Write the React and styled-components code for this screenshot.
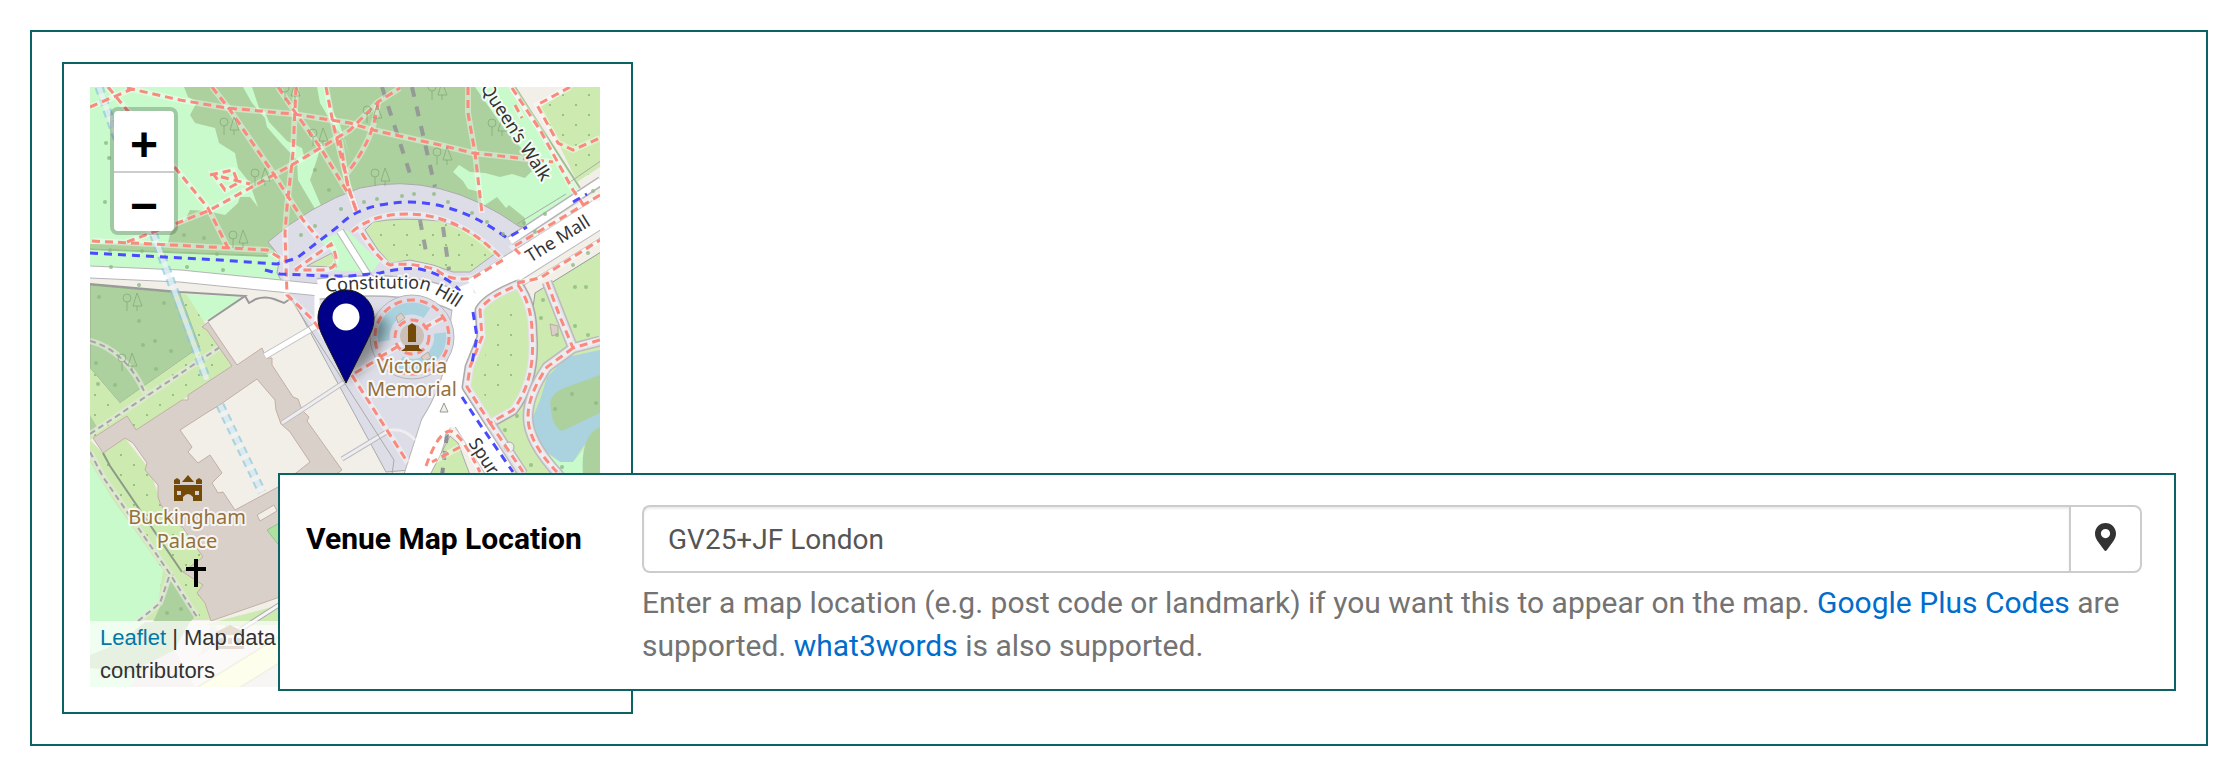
import styled, { createGlobalStyle } from 'styled-components'

const App = () => {
  return (
    <>
      <GlobalStyle />
      <Page>
        <MapFrame>
          <MapView>
            <StreetMap />
            <ZoomControl>
              <ZoomButton type="button" aria-label="Zoom in">+</ZoomButton>
              <ZoomButton type="button" aria-label="Zoom out">−</ZoomButton>
            </ZoomControl>
            <Attribution>
              <MapLink href="#leaflet">Leaflet</MapLink> | Map data
              <br />
              contributors
            </Attribution>
          </MapView>
        </MapFrame>

        <FieldPanel>
          <Label htmlFor="venue-location">Venue Map Location</Label>
          <div>
            <InputGroup>
              <Input id="venue-location" type="text" defaultValue="GV25+JF London" />
              <PinButton type="button" aria-label="Find on map">
                <PinIcon viewBox="0 0 21 28">
                  <path
                    fillRule="evenodd"
                    d="M10.5 0C4.7 0 0 4.7 0 10.5c0 3 1.100 5.300 2.500 7.400l6.800 9.300q1.200 1.400 2.400 0l6.800-9.300C19.900 15.800 21 13.500 21 10.500 21 4.700 16.300 0 10.500 0zm0 6a4.600 4.600 0 1 1 0 9.200 4.600 4.600 0 0 1 0-9.200z"
                  />
                </PinIcon>
              </PinButton>
            </InputGroup>
            <Help>
              Enter a map location (e.g. post code or landmark) if you want this to appear on the map.{' '}
              <HelpLink href="#plus-codes">Google Plus Codes</HelpLink> are supported.{' '}
              <HelpLink href="#what3words">what3words</HelpLink> is also supported.
            </Help>
          </div>
        </FieldPanel>
      </Page>
    </>
  )
}

export default App

const footways = [
  'M90 107L132 89',
  'M127 88L180 100L227 108L293 114L350 123L373 130L440 145L473 153L510 157L553 162',
  'M108 87L127 110L177 170L208 208L228 248',
  'M212 87L230 110L273 173L303 220L318 238',
  'M278 87L297 115L320 147L348 193',
  'M296 87L293 153L287 207L285 233L287 295L313 320L353 377L408 463',
  'M326 87L333 123L350 193L357 213',
  'M127 242L180 222L210 210L250 188L297 162L350 130L378 102L400 88',
  'M378 102Q374 140 347 173',
  'M340 140L347 183L357 213',
  'M468 87L468 113L475 153L482 213',
  'M92 241L153 244L267 250L287 262',
  'M210 175L233 170L238 183L225 190L214 175L250 184',
  'M512 88L540 130L573 190L585 207',
  'M515 105L522 118M600 195L513 247L520 254',
  'M570 87L537 105L558 143L573 150L600 138',
  'M352 232Q372 214 407 214Q460 214 503 260L473 278Q450 282 437 270Q412 262 390 265Q378 260 360 230',
  'M517 283L540 278L600 240',
  'M480 310L482 337L470 367L467 387L490 423L513 410Q536 380 532 333Q532 305 518 285Q486 298 480 310Z',
  'M547 282L560 317L573 348L600 340M573 348L547 367Q528 395 528 417Q528 442 557 472',
  'M490 423L523 472M295 270L331 244Q345 270 320 270L295 270',
  'M426 466Q438 432 450 431Q460 432 480 472M460 447L432 462',
  'M355 373L377 360',
  'M380 357L402 344M424 328L444 317',
]

const cycleways = [
  'M90 253L220 260L277 264L297 258L340 225Q360 203 410 202Q460 203 507 238L527 227M573 202L587 194',
  'M265 270L280 274L327 276L350 276L380 273Q405 267 420 269Q448 276 460 291',
  'M473 312L477 337L472 363M462 397L477 420L513 472',
]

const trees = [
  [229, 127], [318, 138], [260, 178], [238, 240], [290, 93], [437, 92], [372, 115], [497, 128],
  [442, 157], [380, 178], [132, 303], [127, 363],
]

const bushes = [
  [106, 143], [109, 158], [105, 202], [184, 235], [204, 238], [110, 250], [142, 251], [217, 254],
  [341, 209], [364, 202], [377, 199], [402, 196], [414, 194], [434, 194], [448, 202], [472, 213],
  [487, 222], [503, 234], [524, 223], [545, 214], [593, 191], [535, 232], [315, 170], [329, 190],
  [301, 235], [315, 226], [187, 267], [111, 267], [223, 270],
  [139, 285], [99, 297], [164, 303], [139, 321], [155, 341], [143, 345], [171, 351], [96, 363],
  [98, 384], [115, 385], [156, 369], [573, 265], [588, 253], [575, 287], [586, 287], [543, 300],
  [541, 318], [557, 335], [588, 335], [575, 326], [517, 416], [505, 430], [531, 465], [562, 467],
  [167, 613], [181, 609], [572, 394], [555, 409], [596, 403],
]

const Halo = (props) => (
  <text
    fontFamily='"Noto Sans", sans-serif'
    stroke="#fff"
    strokeOpacity="0.8"
    strokeWidth="4"
    strokeLinejoin="round"
    paintOrder="stroke"
    textAnchor="middle"
    {...props}
  />
)

const StreetMap = () => (
  <MapSvg viewBox="90 87 510 600" role="img" aria-label="Map of Buckingham Palace">
    <defs>
      <pattern id="dots" width="26" height="20" patternUnits="userSpaceOnUse">
        <circle cx="4" cy="5" r="1" fill="#86b573" />
        <circle cx="17" cy="15" r="1" fill="#86b573" />
      </pattern>
      <filter id="soft" x="-50%" y="-50%" width="200%" height="200%">
        <feGaussianBlur stdDeviation="6" />
      </filter>
      <path id="hillPath" d="M326 292Q375 287 420 289Q434 291 470 317" />
    </defs>

    <rect x="90" y="87" width="510" height="600" fill="#f2efe9" />

    {/* park north of the road */}
    <path fill="#c8facc" d="M90 87H508L578 190L525 235L470 285H340L90 266Z" />
    <path
      fill="#add19e"
      d="M184 87L188 97L197 102L190 115L195 123L215 128L219 143L235 153L238 168L250 183L252 190L258 207L250 197L240 197L238 203L225 215L207 211L190 210L185 220L177 225L170 234L168 243L90 244V248L265 255L300 245L360 205L440 200L525 235L525 218L509 205L506 208L497 197L482 207L480 192L468 189L463 181L453 172L459 165L470 172L485 173L500 177L512 174L525 178L533 170L530 158L505 130L475 87Z"
    />
    <path
      fill="#c8facc"
      d="M243 87L252 103L265 118L267 127L280 142L297 160L298 180L305 192L317 212L322 208L310 180L315 165L320 150L305 160L302 148L287 141L269 122L265 112L259 108L252 87Z"
    />
    <path fill="#c8facc" d="M317 87L320 103L330 120L345 140L350 158L340 125L333 112L328 87Z" />
    <path fill="none" stroke="#9ac28f" strokeWidth="2" d="M515 87L580 188M90 249L268 256" />

    {/* gardens east */}
    <path fill="#cdebb0" d="M540 107L573 87H600V167L577 182L557 140Z" />
    <path fill="url(#dots)" d="M540 107L573 87H600V167L577 182L557 140Z" />
    <path fill="#cdebb0" stroke="#999" d="M535 293L601 252V480H515L480 420L530 330Z" />
    <path
      fill="#aad3df"
      d="M600 350L567 357L547 377L540 400L533 417Q533 435 540 447L560 462H573L583 447L600 430Z"
    />
    <path fill="#add19e" d="M600 375L567 387Q552 392 550 403L552 417Q555 428 562 431L600 413Z" />
    <path fill="#c8facc" d="M530 440L545 452L560 462H573L600 430V475H556Z" />
    <path fill="#add19e" d="M583 475Q580 435 600 427V475Z" />

    {/* plaza */}
    <path
      fill="#dddde8"
      stroke="#aaa"
      d="M268 242Q310 205 360 188Q440 170 520 227L540 224L515 262L470 290L460 360L420 430L410 470L386 472L290 295L277 273L280 257Z"
    />
    <path fill="#c8facc" d="M320 240L347 230L380 262L372 272L325 270L338 258Z" />
    <path
      fill="#cdebb0"
      stroke="#aaa"
      d="M365 230L373 222Q400 217 440 221Q473 230 496 253L470 272H453L433 265L410 260L390 263L378 250ZM307 266L332 253L337 267Z"
    />
    <path fill="url(#dots)" d="M365 230L373 222Q400 217 440 221Q473 230 496 253L470 272H453L433 265L410 260L390 263Z" />
    <path
      fill="none"
      stroke="#8d8d95"
      strokeWidth="4"
      strokeDasharray="10 10"
      strokeOpacity="0.8"
      d="M382 87L412 180M412 87L435 187M420 220L427 257M443 227L449 270"
    />
    <path fill="none" stroke="#bbb" strokeWidth="8" d="M340 231L369 277" />
    <path fill="none" stroke="#fff" strokeWidth="6" d="M340 231L369 277" />

    {/* roads */}
    <g fill="none" stroke="#b5b5b8" strokeLinejoin="round">
      <path strokeWidth="13" d="M90 272L180 276L250 283L320 290" />
      <path strokeWidth="22" d="M318 289Q420 278 465 306" />
      <path strokeWidth="30" d="M600 213L475 292" />
      <path strokeWidth="10" d="M510 241L601 181" />
      <path strokeWidth="30" d="M470 292Q462 330 465 350Q452 400 435 425L418 478M452 395L505 478" />
    </g>
    <path fill="none" stroke="#aaa" d="M517 224L566 194M500 300L600 238M570 182L605 158M90 284" />
    <g fill="none" stroke="#fff" strokeLinejoin="round">
      <path strokeWidth="11" d="M88 272L180 276L250 283L320 290" />
      <path strokeWidth="19" d="M318 289Q420 278 465 306" />
      <path strokeWidth="28" d="M605 210L475 292" />
      <path strokeWidth="7" d="M510 241L601 181" />
      <path strokeWidth="28" d="M470 292Q462 330 465 350Q452 400 435 425L418 478M452 395L505 478" />
    </g>
    <path fill="#fff" d="M452 290L472 282L478 325L470 370L458 395L478 425L425 430L452 370L460 330Z" />
    <path fill="#cdebb0" stroke="#aaa" d="M450 436L458 443L470 475H430Z" />
    <path fill="none" stroke="#8d8d95" strokeWidth="4" strokeDasharray="9 8" d="M447 434L442 476" />
    <path fill="#f2efe9" stroke="#999" d="M440 412L444 403L448 412Z" />

    {/* garden ring beside the roundabout */}
    <g
      fill="#cdebb0"
      strokeLinejoin="round"
    >
      <path stroke="#aaa" strokeWidth="11" d="M480 310L482 337L470 367L467 387L490 423L513 410Q536 380 532 333Q532 305 518 285Q486 298 480 310Z" />
      <path stroke="#e2e0e6" strokeWidth="8" d="M480 310L482 337L470 367L467 387L490 423L513 410Q536 380 532 333Q532 305 518 285Q486 298 480 310Z" />
    </g>
    <path fill="none" stroke="#bbb" strokeWidth="11" d="M547 282L573 348L600 341M573 348L547 367Q528 395 528 417Q528 442 560 476M490 423L523 474" />
    <path fill="none" stroke="#e2e0e6" strokeWidth="8" d="M547 282L573 348L600 341M573 348L547 367Q528 395 528 417Q528 442 560 476M490 423L523 474" />
    <path fill="url(#dots)" d="M488 320L515 297L522 320Q528 375 490 408L478 380L490 340Z" />
    <path fill="#d9d0c9" stroke="#bca9a0" d="M550 324L558 326V334L552 336Z" />
    <circle cx="509" cy="447" r="5" fill="#eee" stroke="#aaa" />

    {/* palace grounds */}
    <path fill="#add19e" stroke="#8fae83" d="M90 285L180 293L200 347L120 403L90 368Z" />
    <path fill="#c8facc" d="M183 294L245 297L203 322Z" />
    <path fill="#cdebb0" d="M180 293L187 295L204 322L233 366L136 431L127 416L90 440V368L120 403L200 347Z" />
    <path fill="url(#dots)" d="M180 293L187 295L204 322L233 366L136 431L127 416L90 440V368L120 403L200 347Z" />
    <path fill="none" stroke="#999" strokeWidth="2" d="M90 284L180 292L245 296L208 321M245 296L249 303L256 299Q265 296 274 299L284 303L290 299" />
    <path fill="#cdebb0" d="M90 440L103 453L125 438L150 470L160 500L205 557L213 620H90Z" />
    <path fill="url(#dots)" d="M90 440L103 453L125 438L150 470L160 500L205 557L213 620H165Z" />
    <path fill="#c8facc" d="M90 462L113 500L163 570L158 603L143 620V687H90Z" />
    <path fill="#add19e" d="M170 580L197 615L190 622H153L163 600Z" />
    <path fill="#add19e" d="M90 415L97 427L90 433Z" />
    <g fill="none">
      <path stroke="#e3e8dc" strokeWidth="6" strokeOpacity="0.7" d="M90 341Q125 350 145 393M90 434L220 347M90 452L103 477L170 574L197 617M169 577L160 603L137 622" />
      <path stroke="#aaa3ad" strokeWidth="2" strokeDasharray="6 4" d="M90 341Q125 350 145 393M90 434L220 347M90 452L103 477L170 574L197 617M169 577L160 603L137 622" />
    </g>
    <path
      fill="#d9d0c9"
      stroke="#c3afa6"
      d="M202 327L208 322L220 340L237 365L262 348L266 358H272V365L293 397L298 399L302 410L309 417L307 421L342 470L300 500V590L211 621L205 603L197 593L203 585L183 572L203 557L183 528Q160 510 158 497V485L145 470L147 463L133 443L125 438L103 453L93 438L127 416L136 430L182 400H188V395L232 366L207 330Z"
    />
    <path
      fill="#f2efe9"
      stroke="#c3afa6"
      d="M257 379L218 406L208 412L180 430L192 447L188 452L198 463L210 455L222 473L212 483L218 493L223 492L235 510L278 487L310 462L290 432L281 424L276 410L275 400L262 385Z"
    />
    <path fill="#f2efe9" stroke="#c3afa6" d="M257 515L274 505L277 511L260 521ZM225 625L240 616L245 625Z" />
    <path fill="#aee0a0" stroke="#9ac28f" d="M267 530L281 522V548Z" />
    <path fill="none" stroke="#8d9a86" strokeWidth="2" d="M103 453L110 466L182 572" />
    <path fill="#cdebb0" d="M210 623L280 605V625H205Z" />
    <path fill="none" stroke="#aaa" strokeWidth="5" d="M240 630L282 603" />
    <path fill="none" stroke="#f6f6f8" strokeWidth="3" d="M240 630L282 603" />

    {/* streets under the attribution strip */}
    <path fill="#add19e" d="M90 655Q120 645 145 622H190L160 675L90 668Z" />
    <path fill="#e3dfda" d="M130 687L145 665L175 650L195 687ZM240 687L282 660V687ZM212 622L226 640L200 655Z" />
    <path fill="none" stroke="#c8d4a5" strokeWidth="24" d="M198 700L290 643" />
    <path fill="none" stroke="#f7fabf" strokeWidth="21" d="M198 700L290 643" />
    <path fill="#a98c66" d="M216 632L230 625L244 632V635H216ZM219 638H223V644H219ZM228 638H232V644H228ZM237 638H241V644H237ZM216 646H244V649H216Z" />

    {/* gravel tracks in the forecourt */}
    <g fill="none">
      <path stroke="#c3c3c6" strokeWidth="7" d="M265 356L316 326" />
      <path stroke="#fff" strokeWidth="5" d="M265 356L316 326M317 328V292" />
      <path stroke="#bdbdc2" strokeWidth="5" d="M282 423L346 381M342 459L390 430" />
      <path stroke="#efedf0" strokeWidth="3" d="M282 423L346 381M342 459L390 430Q405 428 415 440" />
      <path stroke="#aaa" d="M292 301L394 460L392 474" />
    </g>

    {/* culverted stream, two dashed banks */}
    <g fill="none" strokeOpacity="0.7">
      <path stroke="#8cc8dd" strokeWidth="9" strokeDasharray="7 5" d="M99 87L114 130L152 230L173 287L207 380M220 405L262 492" />
      <path stroke="#eef4f3" strokeWidth="5" d="M99 87L114 130L152 230L173 287L207 380M220 405L262 492" />
    </g>

    {/* memorial */}
    <circle cx="412" cy="337" r="42" fill="#dddde8" stroke="#b5b5b8" />
    <path fill="none" stroke="#aad3df" strokeWidth="12" d="M384 341A28 28 0 0 1 427 313M440 333A28 28 0 0 1 400 362" />
    <circle cx="412" cy="336" r="12" fill="#cbbfb8" />
    <path fill="#d9d0c9" stroke="#bca9a0" d="M396 317L401 313L405 318L398 323ZM421 357L428 352L431 358L424 361Z" />

    <g fill="none" stroke="#fff" strokeOpacity="0.4" strokeWidth="6">
      {footways.map((d) => <path key={d} d={d} />)}
    </g>
    <g fill="none" stroke="#fa8a7c" strokeWidth="3" strokeDasharray="8 5">
      {footways.map((d) => <path key={d} d={d} />)}
      <circle cx="412" cy="337" r="37" />
      <circle cx="412" cy="337" r="17" />
    </g>
    <g fill="none" stroke="#4a4aff" strokeWidth="3" strokeDasharray="8 6">
      {cycleways.map((d) => <path key={d} d={d} />)}
    </g>

    <g fill="#8cb981" fillOpacity="0.8">
      {bushes.map(([x, y]) => <circle key={`${x}-${y}`} cx={x} cy={y} r="2" />)}
    </g>
    <g fill="none" stroke="#7fa673" strokeOpacity="0.7">
      {trees.map(([x, y]) => (
        <g key={`${x}-${y}`} transform={`translate(${x} ${y})`}>
          <circle cx="-5" cy="-5" r="4" />
          <path d="M-5 -1V8M5 -10L1 3H10ZM5 3V8" />
        </g>
      ))}
    </g>

    {/* castle, monument and chapel symbols */}
    <path
      fill="#734a08"
      d="M174 484V480L177 478L180 480V484ZM182 482L188 475L194 482ZM196 484V480L199 478L202 480V484ZM174 485H202V501H193V497Q188 491 183 497V501H174ZM177 491V495H181V491ZM195 491V495H199V491Z"
      fillRule="evenodd"
    />
    <path fill="#734a08" d="M408 326L412 323L416 326V342H408ZM405 345H419V348L423 351H401L405 348Z" />
    <path fill="#000" d="M194 559H198V567H206V571H198V587H194V571H186V567H194Z" />

    {/* marker shadow lies under the labels */}
    <path fill="#000" fillOpacity="0.4" filter="url(#soft)" d="M346 383L356 325Q376 305 388 325Q384 352 346 383Z" />

    <g fontSize="20" fill="#94703c">
      <Halo x="187" y="524">Buckingham</Halo>
      <Halo x="187" y="548">Palace</Halo>
      <Halo x="412" y="373">Victoria</Halo>
      <Halo x="412" y="396">Memorial</Halo>
    </g>
    <g fontSize="18" fill="#333">
      <Halo textAnchor="start"><textPath href="#hillPath">Constitution Hill</textPath></Halo>
      <Halo transform="translate(561 244) rotate(-32)">The Mall</Halo>
      <Halo transform="translate(511 135) rotate(57)">Queen’s Walk</Halo>
      <Halo transform="translate(468 443) rotate(57)" textAnchor="start">Spur</Halo>
    </g>

    <path
      fill="#000088"
      stroke="#111"
      d="M346 290C330 290 318 303 318 318C318 328 322 334 325 341L346 383L367 341C370 334 374 328 374 318C374 303 362 290 346 290Z"
    />
    <circle cx="346" cy="317" r="13.5" fill="#fff" />
  </MapSvg>
)

const GlobalStyle = createGlobalStyle`
  * {
    box-sizing: border-box;
  }

  body {
    margin: 0;
    background: #fff;
    font-family: Roboto, sans-serif;
  }
`

// the map and the field share one grid cell, the field lies on top
const Page = styled.main`
  display: grid;
  margin: 30px;
  padding: 30px;
  border: 2px solid #0b6366;
`

const MapFrame = styled.section`
  grid-area: 1 / 1;
  justify-self: start;
  padding: 23px 31px 25px 26px;
  border: 2px solid #0b6366;
`

const MapView = styled.div`
  position: relative;
`

const MapSvg = styled.svg`
  display: block;
  width: 510px;
  height: 600px;
`

const ZoomControl = styled.div`
  position: absolute;
  top: 20px;
  left: 20px;
  border: 4px solid rgba(0, 0, 0, 0.2);
  border-radius: 8px;
  background: #fff;
  background-clip: padding-box;
`

const ZoomButton = styled.button`
  display: block;
  width: 60px;
  height: 60px;
  padding: 8px 0 0;
  border: 0;
  background: none;
  color: #000;
  font: bold 48px/50px 'Liberation Sans', sans-serif;
  cursor: pointer;

  & + & {
    border-top: 2px solid #ccc;
  }
`

const Attribution = styled.div`
  position: absolute;
  right: 0;
  bottom: 0;
  left: 0;
  padding: 0 10px;
  background: rgba(255, 255, 255, 0.7);
  color: #333;
  font: 22px/33px 'Liberation Sans', sans-serif;
`

const MapLink = styled.a`
  color: #0078a8;
  text-decoration: none;
`

const FieldPanel = styled.section`
  z-index: 1;
  grid-area: 1 / 1;
  align-self: end;
  display: grid;
  grid-template-columns: 336px 1fr;
  margin: 0 0 23px 216px;
  padding: 30px 32px 22px 26px;
  border: 2px solid #0b6366;
  background: #fff;
`

const Label = styled.label`
  color: #000;
  font-size: 30px;
  font-weight: 700;
  line-height: 68px;
`

const InputGroup = styled.div`
  display: flex;
  height: 68px;
`

const Input = styled.input`
  flex: 1;
  min-width: 0;
  padding: 0 24px;
  border: 2px solid #ccc;
  border-right: 0;
  border-radius: 8px 0 0 8px;
  box-shadow: inset 0 2px 2px rgba(0, 0, 0, 0.075);
  color: #555;
  font: 28px Roboto, sans-serif;
`

const PinButton = styled.button`
  display: flex;
  align-items: center;
  justify-content: center;
  width: 73px;
  padding: 0 0 4px;
  border: 2px solid #ccc;
  border-radius: 0 8px 8px 0;
  background: #fff;
  color: #333;
  cursor: pointer;
`

const PinIcon = styled.svg`
  width: 21px;
  height: 28px;
  fill: currentColor;
`

const Help = styled.p`
  margin: 8px 0 0;
  color: #737373;
  font-size: 30px;
  line-height: 43px;
`

const HelpLink = styled.a`
  color: #006dcc;
  text-decoration: none;
`
